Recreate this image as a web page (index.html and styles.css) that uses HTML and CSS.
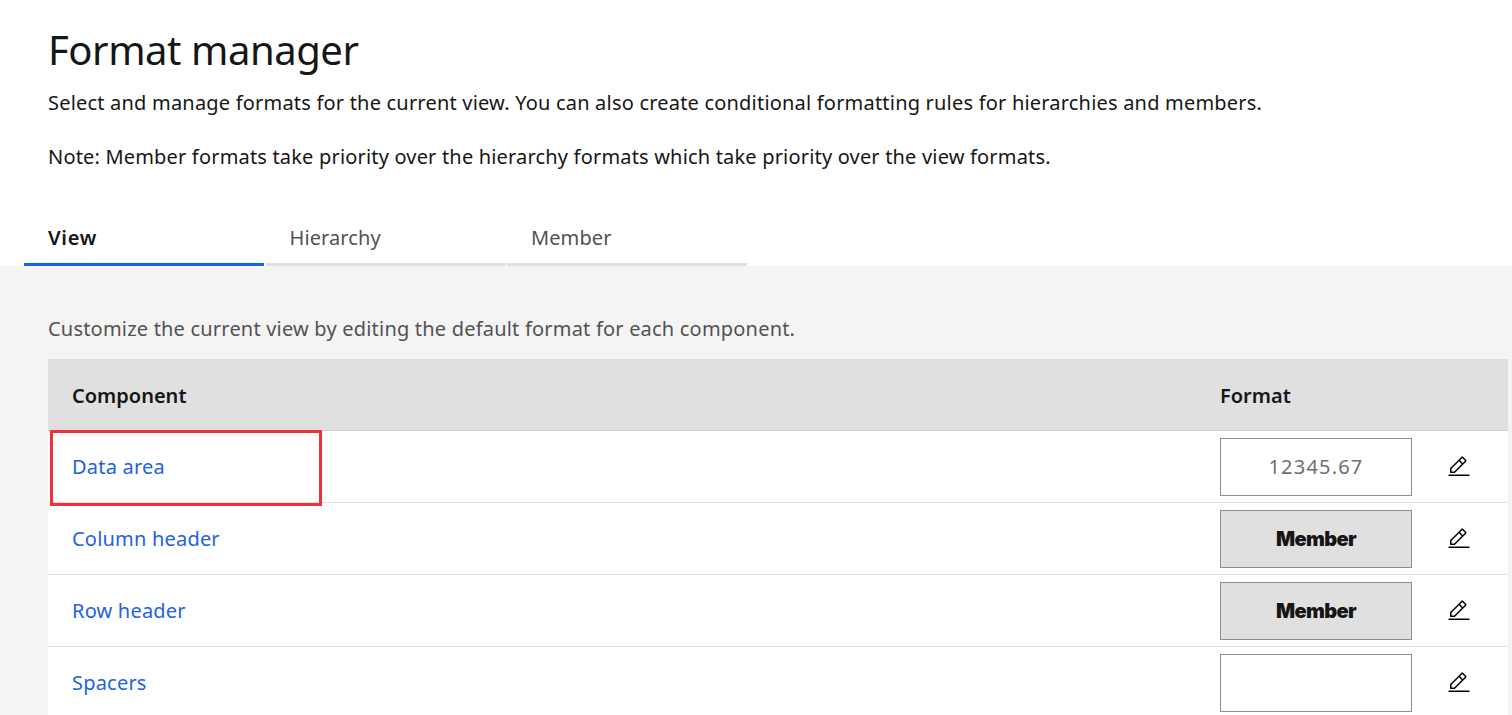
FILE: index.html
```html
<!DOCTYPE html>
<html lang="en">
<head>
    <meta charset="UTF-8">
    <meta name="viewport" content="width=device-width, initial-scale=1.0">
    <title>Format manager</title>
    <link rel="stylesheet" href="styles.css">
</head>
<body>
    <header class="intro">
        <h1>Format manager</h1>
        <p>Select and manage formats for the current view. You can also create conditional formatting rules for hierarchies and members.</p>
        <p class="note">Note: Member formats take priority over the hierarchy formats which take priority over the view formats.</p>
    </header>

    <div class="tabs">
        <div class="tab tab-active">View</div>
        <div class="tab">Hierarchy</div>
        <div class="tab">Member</div>
    </div>

    <main class="panel">
        <p class="panel-text">Customize the current view by editing the default format for each component.</p>
        <div class="table">
            <div class="highlight"></div>
            <div class="row row-head">
                <div class="cell-name">Component</div>
                <div class="cell-format">Format</div>
            </div>
            <div class="row">
                <a class="cell-name link" href="#">Data area</a>
                <div class="swatch swatch-number">12345.67</div>
                <svg class="edit" viewBox="0 0 32 32"><path d="M2 26h28v2H2zM25.4 9c.8-.8.8-2 0-2.8l-3.6-3.6c-.8-.8-2-.8-2.8 0l-15 15V24h6.4l15-15zm-5-5L24 7.6l-3 3L17.4 7l3-3zM6 22v-3.6l10-10L19.6 12l-10 10H6z"/></svg>
            </div>
            <div class="row">
                <a class="cell-name link" href="#">Column header</a>
                <div class="swatch swatch-member">Member</div>
                <svg class="edit" viewBox="0 0 32 32"><path d="M2 26h28v2H2zM25.4 9c.8-.8.8-2 0-2.8l-3.6-3.6c-.8-.8-2-.8-2.8 0l-15 15V24h6.4l15-15zm-5-5L24 7.6l-3 3L17.4 7l3-3zM6 22v-3.6l10-10L19.6 12l-10 10H6z"/></svg>
            </div>
            <div class="row">
                <a class="cell-name link" href="#">Row header</a>
                <div class="swatch swatch-member">Member</div>
                <svg class="edit" viewBox="0 0 32 32"><path d="M2 26h28v2H2zM25.4 9c.8-.8.8-2 0-2.8l-3.6-3.6c-.8-.8-2-.8-2.8 0l-15 15V24h6.4l15-15zm-5-5L24 7.6l-3 3L17.4 7l3-3zM6 22v-3.6l10-10L19.6 12l-10 10H6z"/></svg>
            </div>
            <div class="row">
                <a class="cell-name link" href="#">Spacers</a>
                <div class="swatch"></div>
                <svg class="edit" viewBox="0 0 32 32"><path d="M2 26h28v2H2zM25.4 9c.8-.8.8-2 0-2.8l-3.6-3.6c-.8-.8-2-.8-2.8 0l-15 15V24h6.4l15-15zm-5-5L24 7.6l-3 3L17.4 7l3-3zM6 22v-3.6l10-10L19.6 12l-10 10H6z"/></svg>
            </div>
        </div>
    </main>
</body>
</html>
```

FILE: styles.css
```css
html, body {
    height: 715px;
    overflow: hidden;
}

body {
    margin: 0;
    background-color: #fff;
    color: #161616;
    font-family: 'Noto Sans', sans-serif;
    font-size: 20px;
    letter-spacing: 0.2px;
}

.intro {
    height: 210px;
    padding: 24px 48px 0;
    box-sizing: border-box;
}

h1 {
    margin: 0 0 12px;
    font-size: 40px;
    font-weight: 400;
    line-height: 52px;
    letter-spacing: -0.45px;
}

.intro p {
    margin: 0;
    line-height: 30px;
}

.intro .note {
    margin-top: 24px;
    letter-spacing: 0.18px;
}

.tabs {
    display: flex;
    gap: 1.5px;
    height: 56px;
    padding-left: 24px;
    letter-spacing: 0.1px;
}

.tab {
    width: 240px;
    box-sizing: border-box;
    padding: 15px 0 0 24px;
    border-bottom: 3px solid #e0e0e0;
    color: #525252;
    line-height: 26px;
}

.tab-active {
    border-bottom-color: #1762e6;
    color: #161616;
    font-weight: 600;
    letter-spacing: 0.7px;
}

.panel {
    height: 449px;
    box-sizing: border-box;
    overflow: hidden;
    padding: 48px 4px 0 48px;
    background-color: #f4f4f4;
}

.panel-text {
    margin: 0 0 15px;
    color: #525252;
    line-height: 30px;
}

.table {
    position: relative;
    background-color: #fff;
}

.row {
    display: flex;
    align-items: center;
    height: 72px;
    box-sizing: border-box;
    padding-left: 24px;
    border-bottom: 1px solid #e0e0e0;
}

.row-head {
    height: 72px;
    padding-top: 2px;
    background-color: #e0e0e0;
    border-bottom-color: #d0d0d0;
    font-weight: 600;
    letter-spacing: 0;
}

.cell-name {
    width: 1148px;
}

.link {
    color: #1f62dc;
    text-decoration: none;
}

.swatch {
    width: 192px;
    height: 58px;
    box-sizing: border-box;
    border: 1px solid #8d8d8d;
    background-color: #fff;
    text-align: center;
    line-height: 56px;
}

.swatch-number {
    color: #6f6f6f;
    letter-spacing: 1.2px;
}

.swatch-member {
    background-color: #e0e0e0;
    font-family: 'Inter', sans-serif;
    font-weight: 900;
    letter-spacing: -0.6px;
}

.edit {
    width: 24px;
    height: 24px;
    margin-left: 35px;
}

.highlight {
    position: absolute;
    left: 2px;
    top: 71px;
    width: 266px;
    height: 70px;
    border: 3px solid #ee3338;
}
```
